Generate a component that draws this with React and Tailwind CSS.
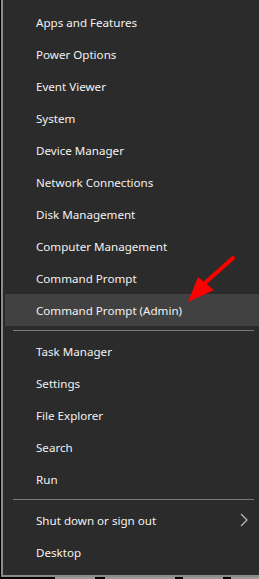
import React from "react";

const group1 = [
  "Apps and Features",
  "Power Options",
  "Event Viewer",
  "System",
  "Device Manager",
  "Network Connections",
  "Disk Management",
  "Computer Management",
  "Command Prompt",
  "Command Prompt (Admin)",
];
const group2 = ["Task Manager", "Settings", "File Explorer", "Search", "Run"];

function Item({ label, active, chevron }) {
  return (
    <div
      className={`flex h-[32px] items-center justify-between pl-[31px] pr-[10px] ${
        active ? "bg-[#414141]" : ""
      }`}
    >
      <span className="pt-[2px] text-[11.6px] text-[#f2f2f2] leading-none">{label}</span>
      {chevron && (
        <svg width="10" height="14" viewBox="0 0 10 14">
          <path d="M2 1 L8 7 L2 13" stroke="#bdbdbd" strokeWidth="1.2" fill="none" />
        </svg>
      )}
    </div>
  );
}

function Sep() {
  return (
    <div className="flex h-[9px] items-center pl-[8px] pr-[5px]">
      <div className="h-px w-full bg-[#7a7a7a]" />
    </div>
  );
}

export default function App() {
  return (
    <div
      className="relative h-[579px] w-[259px] overflow-hidden bg-black"
      style={{ fontFamily: '"Noto Sans", "Open Sans", sans-serif' }}
    >
      <div className="ml-px h-[577px] border-b-2 border-l-2 border-[#8c8c8c] bg-[#2b2b2b] pt-[6px]">
        <div className="pl-[2px]">
          {group1.map((l, i) => (
            <Item key={l} label={l} active={i === 9} />
          ))}
          <Sep />
          {group2.map((l) => (
            <Item key={l} label={l} />
          ))}
          <Sep />
          <Item label="Shut down or sign out" chevron />
          <Item label="Desktop" />
        </div>
      </div>
      <div className="flex h-[2px] w-full">
        <div className="w-[55px] bg-black" />
        <div className="w-[40px] bg-[#9a9a9a]" />
        <div className="w-[10px] bg-black" />
        <div className="w-[70px] bg-[#9a9a9a]" />
        <div className="w-[8px] bg-black" />
        <div className="w-[40px] bg-[#9a9a9a]" />
        <div className="w-[8px] bg-black" />
        <div className="flex-1 bg-[#9a9a9a]" />
      </div>
      <svg
        className="absolute left-0 top-0"
        width="259"
        height="579"
        viewBox="0 0 259 579"
      >
        <line x1="233" y1="258" x2="206" y2="282" stroke="#ff0000" strokeWidth="4" strokeLinecap="round" />
        <polygon points="188,302 198,277 214,290" fill="#ff0000" />
      </svg>
    </div>
  );
}
